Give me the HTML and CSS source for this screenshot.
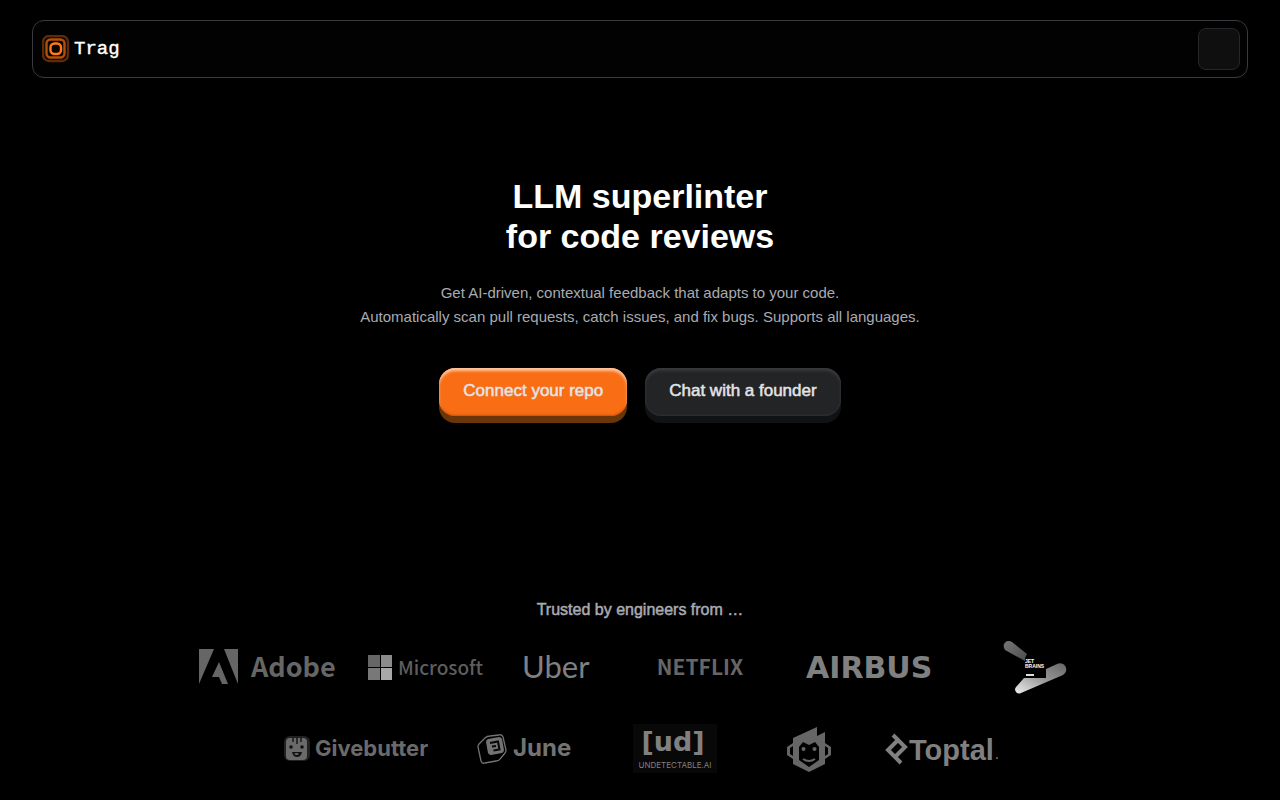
FILE: index.html
```html
<!DOCTYPE html>
<html lang="en">
<head>
<meta charset="utf-8">
<meta name="viewport" content="width=device-width, initial-scale=1">
<title>Trag</title>
<link rel="stylesheet" href="styles.css">
</head>
<body>
<header class="topbar">
  <a class="brand" href="#">
    <svg width="28" height="28" viewBox="0 0 28 28" fill="none" stroke="#f96d14" aria-hidden="true">
      <rect x="1" y="1" width="25" height="25" rx="6" fill="#1c0c02" stroke-width="2.400" opacity=".38"/>
      <rect x="4.500" y="4.500" width="18" height="18" rx="4" stroke-width="2.400" opacity=".7"/>
      <rect x="8.500" y="8.500" width="10.500" height="10.500" rx="4" stroke="#ff7a1c" stroke-width="2.400"/>
    </svg>
    <span class="brand-name">Trag</span>
  </a>
  <button class="menu-button" type="button" aria-label="Menu"></button>
</header>

<main>
  <section class="hero">
    <h1 class="hero-title">LLM superlinter<br>for code reviews</h1>
    <p class="hero-text">Get AI-driven, contextual feedback that adapts to your code.<br>Automatically scan pull requests, catch issues, and fix bugs. Supports all languages.</p>
    <div class="actions">
      <button class="button button-primary" type="button">Connect your repo</button>
      <button class="button button-dark" type="button">Chat with a founder</button>
    </div>
  </section>

  <section class="trusted">
    <h2 class="trusted-title">Trusted by engineers from …</h2>
    <div class="logos">
      <svg width="154" height="54" fill="#666" role="img" aria-label="Adobe">
        <path d="M18 9h15L18 44zM43 9h14v35zM38 22l9 22h-6l-3-7h-7z"/>
        <text class="adobe" x="70" y="37">Adobe</text>
      </svg>
      <svg width="116" height="54" role="img" aria-label="Microsoft">
        <path fill="#666" d="M1 15h12v12H1z"/><path fill="#8c8c8c" d="M14 15h11v12H14z"/>
        <path fill="#787878" d="M1 28h12v12H1z"/><path fill="#a8a8a8" d="M14 28h11v12H14z"/>
        <text class="microsoft" x="31" y="35" fill="#5e5e5e">Microsoft</text>
      </svg>
      <svg width="84" height="54" fill="#808080" role="img" aria-label="Uber">
        <text class="uber" x="7" y="38">Uber</text>
      </svg>
      <svg width="138" height="54" fill="#666" role="img" aria-label="Netflix">
        <text class="netflix" x="69" y="35" text-anchor="middle">NETFLIX</text>
      </svg>
      <svg width="138" height="54" fill="#808080" role="img" aria-label="Airbus">
        <text class="airbus" x="5" y="38">AIRBUS</text>
      </svg>
      <svg width="128" height="54" role="img" aria-label="JetBrains">
        <defs>
          <linearGradient id="jb-low" x1="0" y1="1" x2="1" y2="0"><stop stop-color="#eee"/><stop offset=".5" stop-color="#999"/><stop offset="1" stop-color="#666"/></linearGradient>
          <linearGradient id="jb-top" x1="0" y1="0" x2="1" y2="1"><stop stop-color="#777"/><stop offset="1" stop-color="#4c4c4c"/></linearGradient>
        </defs>
        <path fill="url(#jb-top)" d="M41 2l15 12-2 4v3L34 10C30 4 36-1 41 2z"/>
        <path fill="url(#jb-low)" d="M45 47l8-9h22v-9l11-5a6 6 0 0 1 6 11L50 53a4 4 0 0 1-5-6z"/>
        <g class="jetbrains" fill="#fff"><text x="54" y="23">JET</text><text x="54" y="28">BRAINS</text></g>
        <path fill="#ddd" d="M55 34h8v2h-8z"/>
      </svg>
    </div>
    <div class="logos logos-second">
      <svg width="160" height="50" fill="#6a6a6a" role="img" aria-label="Givebutter">
        <rect x="8" y="12" width="26" height="25" rx="6" fill="#222"/>
        <rect x="10" y="14" width="21" height="22" rx="4"/>
        <path d="M17 13v5M21 13v7M25 13v5" stroke="#181818" stroke-width="1.500"/>
        <circle cx="15" cy="23" r="1.800" fill="#111"/><circle cx="26" cy="23" r="1.800" fill="#111"/>
        <path d="M16 28h10q-1 5-5 5t-5-5z" fill="#111"/>
        <path d="M18 30q3-2 5 0-2 2-5 0z"/>
        <text class="givebutter" x="39" y="32">Givebutter</text>
      </svg>
      <svg width="113" height="50" fill="#737373" role="img" aria-label="June">
        <path fill="none" stroke="#737373" stroke-width="1.300" d="M17 14q2-2 5-2l9-1q3-1 4 2l3 13q0 2-1 3l-5 6q-1 2-4 2l-11 2q-3 1-4-2l-3-14q0-2 1-3z"/>
        <path d="M20 15l11-2q2 0 3 2l2 11q0 2-2 3l-11 2q-2 0-3-2l-2-11q0-2 2-3z"/>
        <path fill="none" stroke="#070707" stroke-width="2" d="M22 19l8-1.500 1.500 8-6 1M24 22.500l4-.5"/>
        <text class="june" x="45" y="32">June</text>
      </svg>
      <svg width="124" height="50" fill="#808080" role="img" aria-label="Undetectable AI">
        <rect x="20" width="84" height="49" fill="#080808"/>
        <text class="undetectable" x="60" y="27" text-anchor="middle">[ud]</text>
        <text class="undetectable-name" x="62" y="44" text-anchor="middle">UNDETECTABLE.AI</text>
      </svg>
      <svg width="80" height="50" fill="#666" role="img" aria-label="Monkey">
        <path fill-rule="evenodd" d="M24 14L48 3v9l8-4v11l6 4v8l-6 4v5L40 48 24 40v-5l-6-4v-8l6-4zM24 22l-3 2v6l3 2zM56 22v10l3-2v-6zM30 23v13l10 7 10-7V23l-4-5-6 3-6-3z"/>
        <circle cx="34.500" cy="25" r="2"/><circle cx="45.500" cy="25" r="2"/>
        <path fill="none" stroke="#666" stroke-width="2" d="M34 35q6 4 12 0"/>
      </svg>
      <svg width="123" height="50" fill="#808080" role="img" aria-label="Toptal">
        <path fill="none" stroke="#808080" stroke-width="4" d="M12 11l12 12-11 11M18 15L7 26l13 13"/>
        <text class="toptal" x="28" y="36">Toptal</text>
        <rect x="115" y="33" width="2" height="2" fill="#555"/>
      </svg>
    </div>
  </section>
</main>
</body>
</html>
```
FILE: styles.css
```css
* { box-sizing: border-box; }

body {
  margin: 0;
  background: #000;
  color: #fff;
  font-family: "Liberation Sans", Arial, sans-serif;
}

.topbar {
  display: flex;
  align-items: center;
  justify-content: space-between;
  margin: 20px 32px 0;
  padding: 7px 7px 7px 9px;
  border: 1px solid #3a3a3f;
  border-radius: 12px;
  background: #020202;
}

.brand {
  display: flex;
  align-items: center;
  gap: 4px;
  color: #fff;
  text-decoration: none;
}

.brand-name {
  font-family: "Liberation Mono", monospace;
  font-size: 19px;
  line-height: 28px;
  -webkit-text-stroke: 0.4px #fff;
}

.menu-button {
  width: 42px;
  height: 42px;
  border: 1px solid #27272a;
  border-radius: 8px;
  background: #0f0f0f;
}

.hero {
  display: flex;
  flex-direction: column;
  align-items: center;
  padding: 98px 24px 0;
  text-align: center;
}

.hero-title {
  margin: 0;
  font-size: 34px;
  line-height: 40px;
}

.hero-text {
  margin: 25px 0 0;
  color: #a9abb2;
  font-size: 15px;
  line-height: 24px;
}

.actions {
  display: flex;
  flex-wrap: wrap;
  justify-content: center;
  gap: 18px;
  margin-top: 39px;
}

.button {
  height: 48px;
  margin: 0 0 8px;
  padding: 0 24px 2px;
  border: 0;
  border-radius: 16px;
  color: #e4e4e7;
  font: 17px/24px "Liberation Sans", Arial, sans-serif;
  -webkit-text-stroke: 0.5px #e4e4e7;
}

.button-primary {
  background: #f96d14;
  box-shadow: inset 0 3px 3px #ffc49c, inset 0 -1px 2px #c95208, 0 7px 0 #693509;
}

.button-dark {
  background: #232426;
  box-shadow: inset 0 3px 3px #38393c, inset 0 -1px 2px #303134, 0 7px 0 #111214;
}

.trusted {
  padding: 174px 24px 24px;
}

.trusted-title {
  margin: 0;
  color: #a9abb2;
  font-size: 16px;
  font-weight: 400;
  line-height: 24px;
  text-align: center;
  -webkit-text-stroke: 0.5px #a9abb2;
}

.logos {
  display: flex;
  flex-wrap: wrap;
  justify-content: center;
  gap: 32px;
  margin-top: 18px;
}

.logos-second { margin-top: 30px; }

.adobe { font: 700 27px "Noto Sans CJK JP", sans-serif; }
.microsoft { font: 500 19px "Noto Sans CJK JP", sans-serif; }
.uber { font: 400 31px Lato, sans-serif; }
.netflix { font: 700 21px "Noto Sans CJK JP", sans-serif; }
.airbus { font: 700 30px "DejaVu Sans", sans-serif; }
.jetbrains { font: 700 5px "Liberation Sans", sans-serif; }
.givebutter { font: 700 22px Inter, sans-serif; }
.june { font: 700 24px Inter, sans-serif; }
.undetectable { font: 700 27px "DejaVu Sans", sans-serif; }
.undetectable-name { font: 400 8px Inter, sans-serif; }
.toptal { font: 700 29px "Liberation Sans", sans-serif; }
```
